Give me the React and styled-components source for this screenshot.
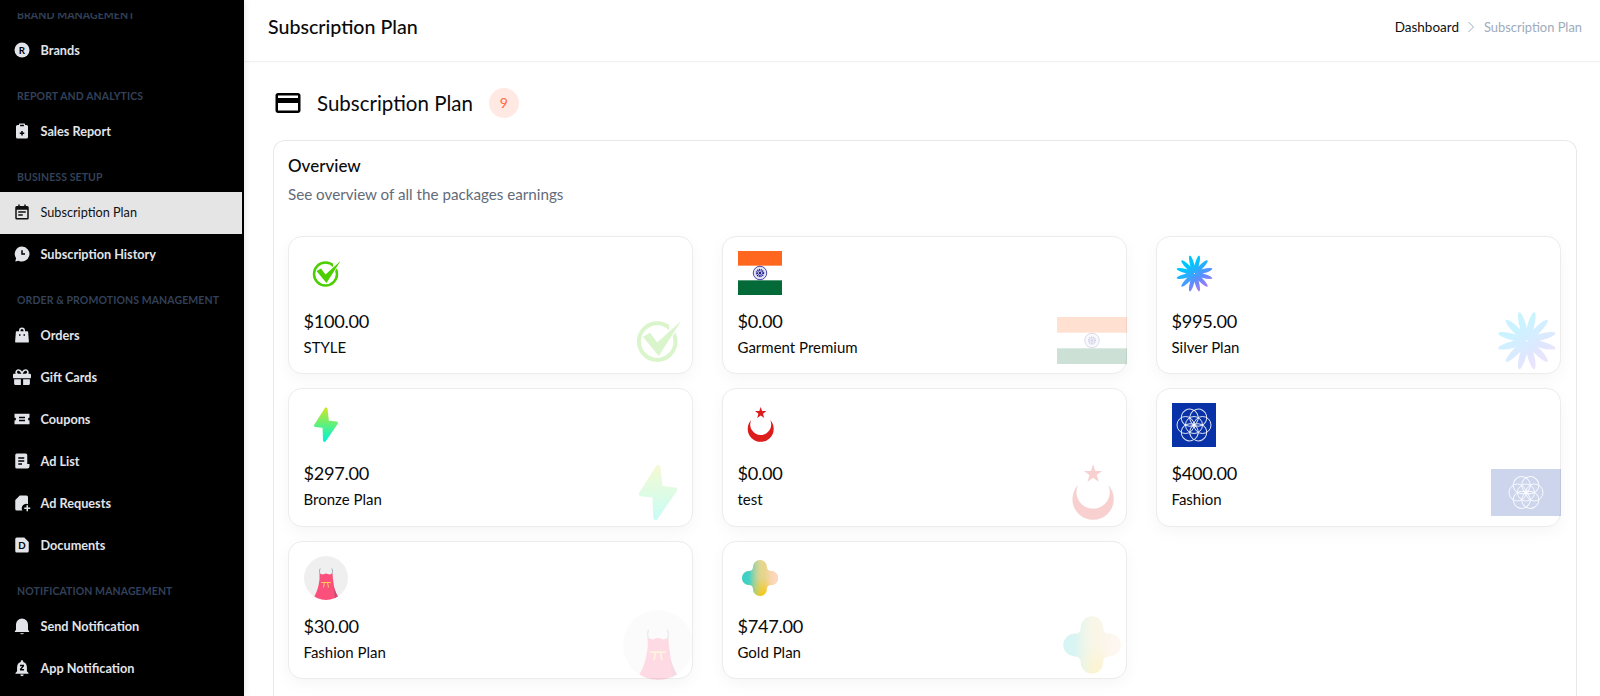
import React from 'react';
import styled, { createGlobalStyle } from 'styled-components';
import { FaGift } from 'react-icons/fa';
import { MdCreditCard, MdNotificationsPaused } from 'react-icons/md';

const GlobalStyle = createGlobalStyle`
  html, body {
    margin: 0;
    height: 100%;
    background: #fff;
    overflow: hidden;
  }
  * {
    box-sizing: border-box;
  }
`;

// Page shell
const Page = styled.div`
  display: grid;
  grid-template-columns: 244px 1fr;
  height: 696px;
  overflow: hidden;
  font-family: 'Lato', 'Open Sans', sans-serif;
  color: #0a0a0a;
`;

const Sidebar = styled.aside`
  background: #000;
  padding-top: 13px;
  height: 696px;
  overflow: hidden;
  box-shadow: 2px 0 6px rgba(0, 0, 0, 0.08);
  z-index: 1;
`;

const SideClip = styled.nav`
  height: 683px;
  overflow: hidden;
`;

const SideScroll = styled.div`
  margin-top: -22px;
`;

const SideLabel = styled.div`
  height: 39px;
  padding: 16px 0 0 17px;
  font-size: 10.5px;
  line-height: 16px;
  font-weight: 700;
  letter-spacing: 0.1px;
  color: #334158;
  text-transform: uppercase;
  white-space: nowrap;
`;

const SideItem = styled.a`
  display: flex;
  align-items: center;
  gap: 9.5px;
  height: 42px;
  width: 242px;
  padding: 0 0 2px 13px;
  font-size: 12.7px;
  font-weight: ${({ $active }) => ($active ? 400 : 700)};
  color: ${({ $active }) => ($active ? '#111' : '#e2e4ea')};
  background: ${({ $active }) => ($active ? '#e5e5e5' : 'transparent')};
  svg {
    width: 18px;
    height: 18px;
    flex: none;
    fill: currentColor;
  }
`;

const Main = styled.main`
  min-width: 0;
  display: flex;
  flex-direction: column;
`;

const TopBar = styled.header`
  display: flex;
  align-items: center;
  justify-content: space-between;
  height: 62px;
  padding: 0 18px 8px 24px;
  border-bottom: 1px solid #f1f1f1;
  box-shadow: 0 1px 3px rgba(0, 0, 0, 0.02);
`;

const TopTitle = styled.h1`
  margin: 0;
  font-size: 19.6px;
  font-weight: 500;
`;

const Crumbs = styled.div`
  display: flex;
  align-items: center;
  gap: 8px;
  font-size: 13.5px;
  color: #111;
  svg {
    width: 9px;
    height: 12px;
    fill: none;
    stroke: #a0abbb;
    stroke-width: 1;
  }
`;

const CrumbMuted = styled.span`
  font-size: 12.9px;
  color: #a0abbb;
`;

const Content = styled.div`
  padding: 0 23px 0 29px;
`;

const Heading = styled.div`
  display: flex;
  align-items: center;
  height: 78px;
  padding-top: 3px;
  svg {
    width: 30px;
    height: 30px;
    margin-right: 14px;
    fill: #000;
  }
`;

const HeadingTitle = styled.h2`
  margin: 0;
  font-size: 20.5px;
  font-weight: 400;
`;

const CountBadge = styled.span`
  display: flex;
  align-items: center;
  justify-content: center;
  width: 30px;
  height: 30px;
  margin-left: 16px;
  border-radius: 50%;
  background: #ffe9e2;
  color: #ff6a45;
  font-size: 14px;
`;

const Overview = styled.section`
  border: 1px solid #e8e8e8;
  border-bottom: 0;
  border-radius: 12px 12px 0 0;
  padding: 14px 15px 30px 14px;
`;

const OverviewTitle = styled.h3`
  margin: 0;
  font-size: 17px;
  line-height: 22px;
  font-weight: 500;
`;

const OverviewText = styled.p`
  margin: 6px 0 0;
  font-size: 15.2px;
  line-height: 22px;
  color: #626b79;
`;

const PlanGrid = styled.div`
  display: grid;
  grid-template-columns: repeat(3, 1fr);
  grid-auto-rows: 138.5px;
  column-gap: 29px;
  row-gap: 14px;
  margin-top: 30.5px;
`;

const PlanCard = styled.article`
  position: relative;
  padding: 14px 15px 14px 14.5px;
  border: 1px solid #ececec;
  border-radius: 14px;
  background: #fff;
  box-shadow: 0 5px 16px rgba(0, 0, 0, 0.04);
`;

const Thumb = styled.div`
  width: 44px;
  height: 44px;
  svg {
    display: block;
    width: 100%;
    height: 100%;
  }
`;

const Price = styled.div`
  margin-top: 13px;
  font-size: 18.2px;
  letter-spacing: -0.3px;
  line-height: 26px;
`;

const PlanName = styled.div`
  margin-top: 3px;
  font-size: 15px;
  line-height: 20px;
`;

const Ghost = styled.div`
  position: absolute;
  right: -1px;
  bottom: -2px;
  display: flex;
  align-items: center;
  width: 70px;
  height: 70px;
  opacity: 0.2;
  pointer-events: none;
  svg {
    display: block;
    width: 100%;
    height: ${({ $flat }) => ($flat ? '47px' : '100%')};
  }
`;

// Plan artwork, all drawn on a 44 unit square
const CheckArt = () => (
  <svg viewBox="0 0 44 44">
    <circle cx="21.5" cy="23" r="11.5" fill="none" stroke="#4ccf00" strokeWidth="2.5" />
    <path d="M29 8l10 0-10 15z" fill="#fff" />
    <path d="M12.5 20l4.500-2.500 4.500 6L36.500 10 22.500 32z" fill="#4ccf00" />
  </svg>
);

const IndiaArt = ({ w, h }) => (
  <svg viewBox={`0 0 ${w} ${h}`} preserveAspectRatio="none">
    <rect width={w} height={h} fill="#fff" />
    <rect width={w} height={h / 3} fill="#ff671f" />
    <rect y={(h * 2) / 3} width={w} height={h / 3} fill="#046a38" />
    <circle cx={w / 2} cy={h / 2} r={h / 6 - 0.6} fill="#e4e4f6" stroke="#20208f" strokeWidth="0.8" />
    <circle
      cx={w / 2}
      cy={h / 2}
      r="3"
      fill="none"
      stroke="#20208f"
      strokeWidth="2.4"
      strokeDasharray="1 0.6"
    />
    <circle cx={w / 2} cy={h / 2} r="1.2" fill="#20208f" />
  </svg>
);

const BurstArt = ({ uid }) => (
  <svg viewBox="0 0 44 44">
    <defs>
      <linearGradient id={`burst-${uid}`} x1="0.15" y1="0.1" x2="0.75" y2="1">
        <stop offset="0.3" stopColor="#00c6ff" />
        <stop offset="0.65" stopColor="#5f8cff" />
        <stop offset="1" stopColor="#d76be6" />
      </linearGradient>
      <clipPath id={`burst-clip-${uid}`}>
        {Array.from({ length: 12 }, (_, i) => (
          <ellipse
            key={i}
            cx="22.5"
            cy="13"
            rx="2.1"
            ry="9"
            transform={`rotate(${i * 30 + 15} 22.5 22.5)`}
          />
        ))}
      </clipPath>
    </defs>
    <rect width="44" height="44" fill={`url(#burst-${uid})`} clipPath={`url(#burst-clip-${uid})`} />
  </svg>
);

const BoltArt = ({ uid }) => (
  <svg viewBox="0 0 44 44">
    <defs>
      <linearGradient id={`bolt-${uid}`} x1="0.5" y1="0" x2="0.5" y2="1">
        <stop offset="0" stopColor="#c6e82a" />
        <stop offset="0.5" stopColor="#5ef07d" />
        <stop offset="1" stopColor="#00f5d0" />
      </linearGradient>
    </defs>
    <path
      d="M22 6L11.500 22.500l8.500 1L20.500 37.500 32.500 20l-9-1z"
      fill={`url(#bolt-${uid})`}
      stroke={`url(#bolt-${uid})`}
      strokeWidth="3"
      strokeLinejoin="round"
    />
  </svg>
);

const CrescentArt = () => (
  <svg viewBox="0 0 44 44">
    <path d="M13.200 17A13 13 0 1 0 32.200 17A10.500 10.500 0 1 1 13.200 17Z" fill="#dd1c1c" />
    <path
      d="M22.700 4L24.100 8.100 28.400 8.100 25 10.700 26.200 14.900 22.700 12.400 19.200 14.900 20.400 10.700 17 8.100 21.300 8.100z"
      fill="#dd1c1c"
    />
  </svg>
);

const SeedArt = ({ w, h }) => {
  const cx = w / 2;
  const cy = h / 2;
  return (
    <svg viewBox={`0 0 ${w} ${h}`} preserveAspectRatio="none">
      <rect width={w} height={h} fill="#0a32a8" />
      <g fill="none" stroke="#fff" strokeOpacity="0.85" strokeWidth="1">
        <circle cx={cx} cy={cy} r="8.5" />
        {Array.from({ length: 6 }, (_, i) => (
          <circle
            key={i}
            cx={cx}
            cy={cy - 8.5}
            r="8.5"
            transform={`rotate(${i * 60 + 30} ${cx} ${cy})`}
          />
        ))}
      </g>
    </svg>
  );
};

const DressArt = ({ uid }) => (
  <svg viewBox="0 0 44 44">
    <defs>
      <clipPath id={`dress-${uid}`}>
        <circle cx="22" cy="22" r="22" />
      </clipPath>
    </defs>
    <g clipPath={`url(#dress-${uid})`}>
      <rect width="44" height="44" fill="#efefef" />
      <path
        d="M16 18c-.8-2-.6-4 .2-5.500M28 18c.8-2 .6-4-.2-5.500"
        fill="none"
        stroke="#9aa9b8"
        strokeWidth="1"
      />
      <path
        d="M15.500 17.500l3 1 3.500-1 3.500 1 3-1 .5 6 .5 3C30 34 33 40 36 44H8C11 40 14 34 15 26.500l.5-3z"
        fill="#fb507b"
      />
      <path d="M29.500 30c1.500 5 4 10 6.500 14h-5z" fill="#c94a75" />
      <path d="M17 26.500h10M20.500 26.500l-1 5M23.500 26.500l1 5" stroke="#ffc75a" strokeWidth="1.100" fill="none" />
    </g>
  </svg>
);

const cloverShape =
  'M22 4a7 7 0 0 1 7 7Q29 15 33 15a7 7 0 0 1 0 14Q29 29 29 33a7 7 0 0 1-14 0Q15 29 11 29a7 7 0 0 1 0-14Q15 15 15 11a7 7 0 0 1 7-7z';

const CloverArt = ({ uid }) => (
  <svg viewBox="0 0 44 44">
    <defs>
      <linearGradient id={`clover-v-${uid}`} x1="0" y1="0" x2="0" y2="1">
        <stop offset="0" stopColor="#e6d68f" />
        <stop offset="0.5" stopColor="#e6d48a" />
        <stop offset="1" stopColor="#f5c814" />
      </linearGradient>
      <linearGradient id={`clover-h-${uid}`} x1="0" y1="0" x2="1" y2="0">
        <stop offset="0" stopColor="#35d0cd" />
        <stop offset="0.2" stopColor="#45d0c5" />
        <stop offset="0.55" stopColor="#a8d5a0" stopOpacity="0" />
        <stop offset="0.62" stopColor="#fcd6b8" stopOpacity="0" />
        <stop offset="0.85" stopColor="#fcd6b8" />
        <stop offset="1" stopColor="#fcd9bf" />
      </linearGradient>
    </defs>
    <path d={cloverShape} fill={`url(#clover-v-${uid})`} />
    <path d={cloverShape} fill={`url(#clover-h-${uid})`} />
  </svg>
);

const plans = [
  { price: '$100.00', name: 'STYLE', Art: CheckArt },
  { price: '$0.00', name: 'Garment Premium', Art: IndiaArt, flat: true },
  { price: '$995.00', name: 'Silver Plan', Art: BurstArt },
  { price: '$297.00', name: 'Bronze Plan', Art: BoltArt },
  { price: '$0.00', name: 'test', Art: CrescentArt },
  { price: '$400.00', name: 'Fashion', Art: SeedArt, flat: true },
  { price: '$30.00', name: 'Fashion Plan', Art: DressArt },
  { price: '$747.00', name: 'Gold Plan', Art: CloverArt },
];

// Sidebar icons, 24 unit material-style shapes
const Solid = ({ d }) => (
  <svg viewBox="0 0 24 24">
    <path d={d} fillRule="evenodd" />
  </svg>
);

const LetterIcon = ({ d, letter }) => (
  <svg viewBox="0 0 24 24">
    <path d={d} />
    <text x="12" y="17" textAnchor="middle" fontSize="13" fontWeight="700" fontFamily="Lato, sans-serif" fill="#000">
      {letter}
    </text>
  </svg>
);

const icons = {
  brand: <LetterIcon d="M12 2a10 10 0 1 0 0 20a10 10 0 0 0 0-20z" letter="R" />,
  report: <Solid d="M6 4h2V3a1 1 0 0 1 1-1h6a1 1 0 0 1 1 1v1h2a2 2 0 0 1 2 2v14a2 2 0 0 1-2 2H6a2 2 0 0 1-2-2V6a2 2 0 0 1 2-2z M9.500 3.500v2h5v-2z M11 12v2H9v2h2v2h2v-2h2v-2h-2v-2z" />,
  plan: <Solid d="M7 2h2v2h6V2h2v2h2a2 2 0 0 1 2 2v14a2 2 0 0 1-2 2H5a2 2 0 0 1-2-2V6a2 2 0 0 1 2-2h2z M5 9v11h14V9z M7 11h10v2H7z M7 15h6v2H7z" />,
  history: <Solid d="M12 2a10 10 0 1 1-4.600 18.900L3 22l1.100-4.400A10 10 0 0 1 12 2z M11 7v6h5v-2h-3V7z" />,
  orders: <Solid d="M8 7V6a4 4 0 0 1 8 0v1h3.200a1 1 0 0 1 1 .9l1 13a1 1 0 0 1-1 1.100H3.800a1 1 0 0 1-1-1.100l1-13a1 1 0 0 1 1-.9z M10 7h4V6a2 2 0 0 0-4 0z M8 11h2v2H8z M14 11h2v2h-2z" />,
  gift: <FaGift />,
  coupon: <Solid d="M2 5h20v5a2 2 0 0 0 0 4v5H2v-5a2 2 0 0 0 0-4z M8 9h8v2H8z M8 13h8v2H8z" />,
  adList: <Solid d="M5 2h12a2 2 0 0 1 2 2v12h3v3a3 3 0 0 1-3 3H5a2 2 0 0 1-2-2V4a2 2 0 0 1 2-2z M7 7v2h8V7z M7 11v2h8v-2z M7 15v2h5v-2z" />,
  adRequest: <Solid d="M9 2h9a2 2 0 0 1 2 2v9.500a6 6 0 0 0-7.500 8.500H5a2 2 0 0 1-2-2V8z M18 15h2v3h3v2h-3v3h-2v-3h-3v-2h3z" />,
  document: <LetterIcon d="M5 2h10l6 6v12a2 2 0 0 1-2 2H5a2 2 0 0 1-2-2V4a2 2 0 0 1 2-2z" letter="D" />,
  bell: <Solid d="M12 2a8 8 0 0 0-8 8v7l-1.500 2v1h19v-1L20 17v-7a8 8 0 0 0-8-8z M9.500 21.500h5a2.500 1.500 0 0 1-5 0z" />,
  appBell: <MdNotificationsPaused viewBox="3 1 18 22" />,
};

const menu = [
  { label: 'Brand Management', items: [{ icon: 'brand', text: 'Brands' }] },
  { label: 'Report and Analytics', items: [{ icon: 'report', text: 'Sales Report' }] },
  {
    label: 'Business Setup',
    items: [
      { icon: 'plan', text: 'Subscription Plan', active: true },
      { icon: 'history', text: 'Subscription History' },
    ],
  },
  {
    label: 'Order & Promotions Management',
    items: [
      { icon: 'orders', text: 'Orders' },
      { icon: 'gift', text: 'Gift Cards' },
      { icon: 'coupon', text: 'Coupons' },
      { icon: 'adList', text: 'Ad List' },
      { icon: 'adRequest', text: 'Ad Requests' },
      { icon: 'document', text: 'Documents' },
    ],
  },
  {
    label: 'Notification Management',
    items: [
      { icon: 'bell', text: 'Send Notification' },
      { icon: 'appBell', text: 'App Notification' },
    ],
  },
];

const App = () => {
  return (
    <>
      <GlobalStyle />
      <Page>
        <Sidebar>
          <SideClip>
            <SideScroll>
              {menu.map((group) => (
                <React.Fragment key={group.label}>
                  <SideLabel>{group.label}</SideLabel>
                  {group.items.map((item) => (
                    <SideItem key={item.text} $active={item.active}>
                      {icons[item.icon]}
                      {item.text}
                    </SideItem>
                  ))}
                </React.Fragment>
              ))}
            </SideScroll>
          </SideClip>
        </Sidebar>

        <Main>
          <TopBar>
            <TopTitle>Subscription Plan</TopTitle>
            <Crumbs>
              <span>Dashboard</span>
              <svg viewBox="0 0 9 12">
                <path d="M1.500 1l5 5-5 5" />
              </svg>
              <CrumbMuted>Subscription Plan</CrumbMuted>
            </Crumbs>
          </TopBar>

          <Content>
            <Heading>
              <MdCreditCard />
              <HeadingTitle>Subscription Plan</HeadingTitle>
              <CountBadge>9</CountBadge>
            </Heading>

            <Overview>
              <OverviewTitle>Overview</OverviewTitle>
              <OverviewText>See overview of all the packages earnings</OverviewText>

              <PlanGrid>
                {plans.map(({ price, name, Art, flat }, i) => (
                  <PlanCard key={name}>
                    <Thumb>
                      <Art uid={`t${i}`} w={44} h={44} />
                    </Thumb>
                    <Price>{price}</Price>
                    <PlanName>{name}</PlanName>
                    <Ghost $flat={flat}>
                      <Art uid={`g${i}`} w={70} h={47} />
                    </Ghost>
                  </PlanCard>
                ))}
              </PlanGrid>
            </Overview>
          </Content>
        </Main>
      </Page>
    </>
  );
};

export default App;
